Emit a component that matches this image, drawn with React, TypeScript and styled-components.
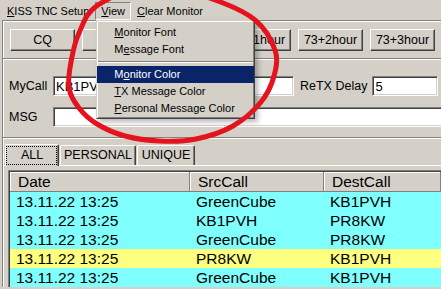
import styled, { createGlobalStyle } from "styled-components"

const GlobalStyle = createGlobalStyle`
  html, body {
    margin: 0;
    padding: 0;
    background: #d4d0c8;
    overflow: hidden;
  }
  body {
    font-family: "Liberation Sans", Arial, sans-serif;
    color: #000;
  }
`

const Window = styled.div`
  position: relative;
  width: 441px;
  height: 289px;
  overflow: hidden;
  background: #d4d0c8;
`

const MenuBar = styled.div`
  display: flex;
  height: 20px;
  padding: 2px 0 0 1px;
  box-sizing: border-box;
  font-size: 11px;
`

const MenuItem = styled.div<{ $open?: boolean }>`
  position: relative;
  height: 18px;
  line-height: 16px;
  padding: 0 5px;
  box-sizing: border-box;
  border: 1px solid transparent;
  white-space: nowrap;
  ${(p) => p.$open && `border-color: #808080 #fff #fff #808080;`}
`

const Dropdown = styled.div`
  position: absolute;
  top: 17px;
  left: 0;
  width: 159px;
  box-sizing: border-box;
  padding: 3px 0 1px;
  background: #d4d0c8;
  border: 1px solid;
  border-color: #d4d0c8 #404040 #404040 #d4d0c8;
  box-shadow: inset 1px 1px #fff, inset -1px -1px #808080, 3px 3px 5px rgba(0, 0, 0, 0.28);
  z-index: 5;
`

const DropItem = styled.div<{ $active?: boolean }>`
  height: 17px;
  line-height: 17px;
  padding-left: 17px;
  background: ${(p) => (p.$active ? "#0a246a" : "transparent")};
  color: ${(p) => (p.$active ? "#fff" : "#000")};
`

const DropSeparator = styled.div`
  margin: 3px 1px 3px;
  border-top: 1px solid #808080;
  border-bottom: 1px solid #fff;
`

const Panel = styled.div`
  margin-left: 2px;
  border-top: 1px solid #808080;
  border-left: 1px solid #808080;
  box-shadow: inset 1px 1px #fff;
`

const ButtonPanel = styled(Panel)`
  display: flex;
  gap: 7px;
  padding: 8px 0 7px 7px;
`

const ToolButton = styled.button`
  flex: none;
  width: 65px;
  height: 22px;
  padding: 0;
  font: 12.5px "Liberation Sans", Arial, sans-serif;
  color: #000;
  background: #d4d0c8;
  border: 1px solid;
  border-color: #fff #404040 #404040 #fff;
  box-shadow: inset -1px -1px #808080;
`

const FieldsPanel = styled(Panel)`
  display: flex;
  flex-direction: column;
  gap: 11px;
  padding: 17px 0 10px 6px;
`

const FieldRow = styled.div`
  display: flex;
  align-items: center;
  height: 20px;
`

const Label = styled.span<{ $w?: number }>`
  flex: none;
  width: ${(p) => (p.$w ? `${p.$w}px` : "auto")};
  font-size: 12.5px;
  margin-left: ${(p) => (p.$w ? "0" : "6px")};
  margin-right: ${(p) => (p.$w ? "0" : "5px")};
`

const TextBox = styled.div<{ $w: number }>`
  flex: none;
  width: ${(p) => p.$w}px;
  height: 20px;
  box-sizing: border-box;
  padding-left: 2px;
  background: #fff;
  border: 1px solid;
  border-color: #808080 #fff #fff #808080;
  box-shadow: inset 1px 1px #404040, inset -1px -1px #d4d0c8;
  font-size: 13px;
  line-height: 19px;
  white-space: nowrap;
  overflow: hidden;
`

const TabArea = styled(Panel)`
  padding-top: 5px;
`

const TabStrip = styled.div`
  display: flex;
  align-items: flex-end;
  gap: 1px;
  padding-left: 2px;
  height: 22px;
`

const Tab = styled.div<{ $w: number; $selected?: boolean }>`
  position: relative;
  flex: none;
  width: ${(p) => p.$w}px;
  height: ${(p) => (p.$selected ? 22 : 20)}px;
  box-sizing: border-box;
  border: 1px solid;
  border-bottom: none;
  border-color: #fff #404040 transparent #fff;
  border-radius: 2px 2px 0 0;
  box-shadow: inset -1px 0 #808080;
  text-align: center;
  font-size: 12.5px;
  line-height: ${(p) => (p.$selected ? 21 : 19)}px;
  background: #d4d0c8;
  z-index: ${(p) => (p.$selected ? 2 : 1)};
  margin-bottom: ${(p) => (p.$selected ? "-1px" : "0")};

  ${(p) =>
    p.$selected &&
    `&::after {
      content: "";
      position: absolute;
      left: 0; right: 1px; top: 1px; bottom: 1px;
      border: 1px dotted #000;
    }`}
`

const TabPane = styled.div`
  border-top: 1px solid #fff;
  border-left: 1px solid #fff;
  padding: 4px 0 0 4px;
`

const TablePane = styled.div`
  border-top: 1px solid #808080;
  border-left: 1px solid #808080;
  padding: 1px 0 0 1px;
  box-shadow: inset 1px 1px #404040;
  background: #fff;
`

const Grid = styled.div`
  display: grid;
  grid-template-columns: 180px 134px 1fr;
  font-size: 15.5px;
  white-space: nowrap;
`

const HeadCell = styled.div`
  height: 20px;
  line-height: 19px;
  box-sizing: border-box;
  padding-left: 8px;
  background: #d4d0c8;
  border-right: 1px solid #808080;
  border-bottom: 1px solid #808080;
  box-shadow: inset 1px 1px #fff;
`

const Cell = styled.div<{ $bg: string }>`
  height: 19px;
  line-height: 19px;
  padding-left: 6px;
  background: ${(p) => p.$bg};
`

const Annotation = styled.svg`
  position: absolute;
  left: 0;
  top: 0;
  pointer-events: none;
  z-index: 10;
`

// hand drawn loop around the View menu
const loop: [number, number][] = [
  [155, -16], [215, 0], [255, 20], [275, 50], [274, 76], [261, 102],
  [233, 126], [196, 139], [160, 141], [125, 136], [97, 124], [79, 108],
  [69, 88], [71, 62], [79, 33], [98, 5],
]

function closedCurve(pts: [number, number][]) {
  const n = pts.length
  let d = `M${pts[0][0]},${pts[0][1]}`
  for (let i = 0; i < n; i++) {
    const p0 = pts[(i - 1 + n) % n]
    const p1 = pts[i]
    const p2 = pts[(i + 1) % n]
    const p3 = pts[(i + 2) % n]
    const c1x = p1[0] + (p2[0] - p0[0]) / 6
    const c1y = p1[1] + (p2[1] - p0[1]) / 6
    const c2x = p2[0] - (p3[0] - p1[0]) / 6
    const c2y = p2[1] - (p3[1] - p1[1]) / 6
    d += ` C${c1x.toFixed(1)},${c1y.toFixed(1)} ${c2x.toFixed(1)},${c2y.toFixed(1)} ${p2[0]},${p2[1]}`
  }
  return d + " Z"
}

const rows = [
  { date: "13.11.22 13:25", src: "GreenCube", dest: "KB1PVH", bg: "#80ffff" },
  { date: "13.11.22 13:25", src: "KB1PVH", dest: "PR8KW", bg: "#80ffff" },
  { date: "13.11.22 13:25", src: "GreenCube", dest: "PR8KW", bg: "#80ffff" },
  { date: "13.11.22 13:25", src: "PR8KW", dest: "KB1PVH", bg: "#ffff80" },
  { date: "13.11.22 13:25", src: "GreenCube", dest: "KB1PVH", bg: "#80ffff" },
]

// the 2nd and 3rd captions sit under the open menu
const buttons = ["CQ", "", "", "73+1hour", "73+2hour", "73+3hour"]

export default function App() {
  return (
    <>
      <GlobalStyle />
      <Window>
        <MenuBar>
          <MenuItem>
            <u>K</u>ISS TNC Setup
          </MenuItem>
          <MenuItem $open>
            <u>V</u>iew
            <Dropdown>
              <DropItem>
                <u>M</u>onitor Font
              </DropItem>
              <DropItem>
                M<u>e</u>ssage Font
              </DropItem>
              <DropSeparator />
              <DropItem $active>
                M<u>o</u>nitor Color
              </DropItem>
              <DropItem>
                <u>T</u>X Message Color
              </DropItem>
              <DropItem>
                <u>P</u>ersonal Message Color
              </DropItem>
            </Dropdown>
          </MenuItem>
          <MenuItem>
            <u>C</u>lear Monitor
          </MenuItem>
        </MenuBar>

        <ButtonPanel>
          {buttons.map((b, i) => (
            <ToolButton key={i}>{b}</ToolButton>
          ))}
        </ButtonPanel>

        <FieldsPanel>
          <FieldRow>
            <Label $w={44}>MyCall</Label>
            <TextBox $w={241}>KB1PVH</TextBox>
            <Label>ReTX Delay</Label>
            <TextBox $w={66}>5</TextBox>
          </FieldRow>
          <FieldRow>
            <Label $w={44}>MSG</Label>
            <TextBox $w={420} />
          </FieldRow>
        </FieldsPanel>

        <TabArea>
          <TabStrip>
            <Tab $w={54} $selected>ALL</Tab>
            <Tab $w={76}>PERSONAL</Tab>
            <Tab $w={58}>UNIQUE</Tab>
          </TabStrip>
          <TabPane>
            <TablePane>
              <Grid>
                <HeadCell>Date</HeadCell>
                <HeadCell>SrcCall</HeadCell>
                <HeadCell>DestCall</HeadCell>
                {rows.flatMap((r, i) => [
                  <Cell key={`d${i}`} $bg={r.bg}>{r.date}</Cell>,
                  <Cell key={`s${i}`} $bg={r.bg}>{r.src}</Cell>,
                  <Cell key={`t${i}`} $bg={r.bg}>{r.dest}</Cell>,
                ])}
              </Grid>
            </TablePane>
          </TabPane>
        </TabArea>

        <Annotation width="441" height="289" viewBox="0 0 441 289">
          <path d={closedCurve(loop)} fill="none" stroke="#e3141d" strokeWidth="5" />
        </Annotation>
      </Window>
    </>
  )
}
